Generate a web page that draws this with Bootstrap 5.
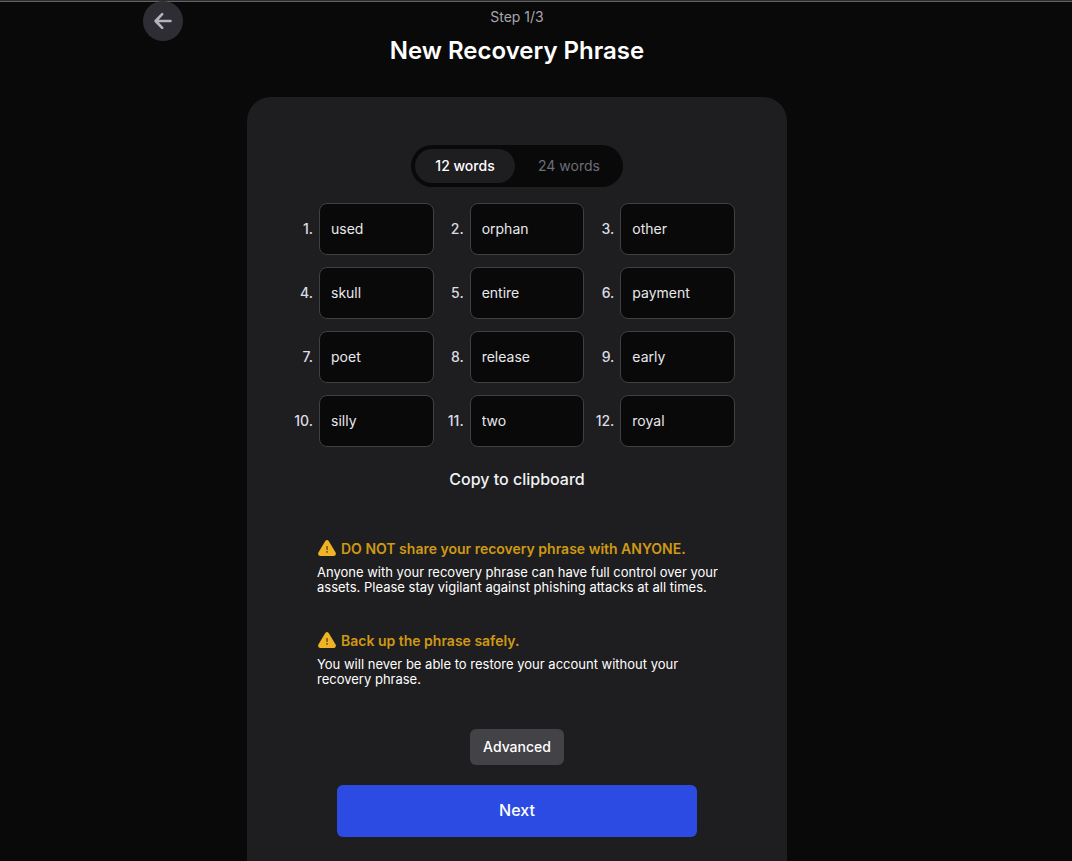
<!DOCTYPE html>
<html lang="en" data-bs-theme="dark">
<head>
<meta charset="utf-8">
<meta name="viewport" content="width=device-width, initial-scale=1">
<title>New Recovery Phrase</title>
<link href="https://cdn.jsdelivr.net/npm/bootstrap@5.3.0/dist/css/bootstrap.min.css" rel="stylesheet">
<style>
body { background: #090909; color: #fff; font-family: Inter, "Liberation Sans", sans-serif; font-size: 14px; line-height: 20px; border-top: 1px solid #2e2e2e; }
.page { box-shadow: inset 0 1px #626262; padding-right: 38px; }
.stage { max-width: 748px; display: grid; grid-template-columns: 40px 1fr 40px; }
.back { width: 40px; height: 40px; background: #2e2d33; color: #b4b2bc; }
.step { color: #a8a6ae; margin-top: 6px; }
.title { font-size: 24px; line-height: 32px; font-weight: 600; margin: 8px 0 30px; }
.panel { max-width: 540px; background: #1e1e20; border-radius: 24px 24px 0 0; padding: 48px 52px 24px 46px; }
.center-line { margin-right: -6px; }
.switch { background: #090909; padding: 4px; gap: 4px; }
.switch button { border: 0; border-radius: 17px; min-width: 100px; height: 34px; padding: 0 19px; background: transparent; color: #6c6e79; }
.switch button.active { background: #1e1e20; color: #fff; font-weight: 500; }
.words { display: grid; grid-template-columns: repeat(3, 1fr); gap: 12px 10px; margin: 16px 0; padding: 0; list-style: none; }
.words label { flex: 0 0 26px; padding-right: 6px; display: flex; justify-content: flex-end; color: #dcdce4; font-weight: 500; }
.words input { height: 52px; background: #090909; border: 1px solid #3f3f44; border-radius: 8px; padding: 0 11px 2px; color: #e8e8ec; font-size: 14px; }
.words input:focus { background: #090909; }
.copy { border: 0; background: transparent; color: #f2f2f4; font-size: 16px; line-height: 24px; padding: 4px 12px; font-weight: 500; }
.notice { width: 408px; max-width: 100%; padding-left: 4px; font-size: 13px; line-height: 15px; }
.notice h2 { font-size: 14px; line-height: 20px; font-weight: 600; color: #cf9914; margin-bottom: 6px; gap: 5px; }
.notice svg { margin: 0 0 2px 1px; }
.notices { gap: 36px; margin-top: 44px; }
.advanced { margin-top: 42px; height: 36px; padding: 0 13px; border: 0; border-radius: 6px; background: #434247; color: #fff; font-size: 14px; line-height: 20px; font-weight: 500; }
.next { margin-top: 20px; width: 360px; max-width: 100%; height: 52px; border: 0; border-radius: 6px; padding-bottom: 3px; background: #2c4be2; color: #fff; font-size: 16px; font-weight: 500; }
</style>
</head>
<body>
<div class="page">
  <header class="stage mx-auto">
    <button type="button" class="back btn rounded-circle p-0 border-0 d-flex align-items-center justify-content-center" aria-label="Back">
      <svg width="20" height="20" viewBox="0 0 20 20" fill="none" stroke="currentColor" stroke-width="2.6" stroke-linecap="round" stroke-linejoin="round"><path d="M17.500 10H3M9.200 3.200 2.600 10l6.600 6.800"/></svg>
    </button>
    <div class="text-center">
      <div class="step">Step 1/3</div>
      <h1 class="title">New Recovery Phrase</h1>
    </div>
  </header>
  <main class="panel mx-auto">
    <div class="center-line d-flex justify-content-center">
      <div class="switch d-flex rounded-pill">
        <button type="button" class="active">12 words</button>
        <button type="button">24 words</button>
      </div>
    </div>
    <ol class="words">
      <li class="d-flex align-items-center"><label for="w1">1.</label><input id="w1" class="form-control" value="used" readonly></li>
      <li class="d-flex align-items-center"><label for="w2">2.</label><input id="w2" class="form-control" value="orphan" readonly></li>
      <li class="d-flex align-items-center"><label for="w3">3.</label><input id="w3" class="form-control" value="other" readonly></li>
      <li class="d-flex align-items-center"><label for="w4">4.</label><input id="w4" class="form-control" value="skull" readonly></li>
      <li class="d-flex align-items-center"><label for="w5">5.</label><input id="w5" class="form-control" value="entire" readonly></li>
      <li class="d-flex align-items-center"><label for="w6">6.</label><input id="w6" class="form-control" value="payment" readonly></li>
      <li class="d-flex align-items-center"><label for="w7">7.</label><input id="w7" class="form-control" value="poet" readonly></li>
      <li class="d-flex align-items-center"><label for="w8">8.</label><input id="w8" class="form-control" value="release" readonly></li>
      <li class="d-flex align-items-center"><label for="w9">9.</label><input id="w9" class="form-control" value="early" readonly></li>
      <li class="d-flex align-items-center"><label for="w10">10.</label><input id="w10" class="form-control" value="silly" readonly></li>
      <li class="d-flex align-items-center"><label for="w11">11.</label><input id="w11" class="form-control" value="two" readonly></li>
      <li class="d-flex align-items-center"><label for="w12">12.</label><input id="w12" class="form-control" value="royal" readonly></li>
    </ol>
    <div class="center-line d-flex flex-column align-items-center">
      <button type="button" class="copy">Copy to clipboard</button>
      <div class="notices d-flex flex-column">
        <section class="notice">
          <h2 class="d-flex align-items-center">
            <svg width="18" height="16" viewBox="0 0 18 16" aria-hidden="true"><path fill="#f0b323" d="M7.300 1Q9-.8 10.700 1L17.600 12.600Q18.600 15.600 16 16H2Q-.6 15.600.400 12.600Z"/><path fill="#7a5c1c" d="M8.200 6h1.700v4H8.200zM8.200 11h1.700v1.700H8.200z"/></svg>
            DO NOT share your recovery phrase with ANYONE.
          </h2>
          <p class="mb-0">Anyone with your recovery phrase can have full control over your assets. Please stay vigilant against phishing attacks at all times.</p>
        </section>
        <section class="notice">
          <h2 class="d-flex align-items-center">
            <svg width="18" height="16" viewBox="0 0 18 16" aria-hidden="true"><path fill="#f0b323" d="M7.300 1Q9-.8 10.700 1L17.600 12.600Q18.600 15.600 16 16H2Q-.6 15.600.400 12.600Z"/><path fill="#7a5c1c" d="M8.200 6h1.700v4H8.200zM8.200 11h1.700v1.700H8.200z"/></svg>
            Back up the phrase safely.
          </h2>
          <p class="mb-0">You will never be able to restore your account without your recovery phrase.</p>
        </section>
      </div>
      <button type="button" class="advanced">Advanced</button>
      <button type="button" class="next">Next</button>
    </div>
  </main>
</div>
<script src="https://cdn.jsdelivr.net/npm/bootstrap@5.3.0/dist/js/bootstrap.bundle.min.js"></script>
</body>
</html>
